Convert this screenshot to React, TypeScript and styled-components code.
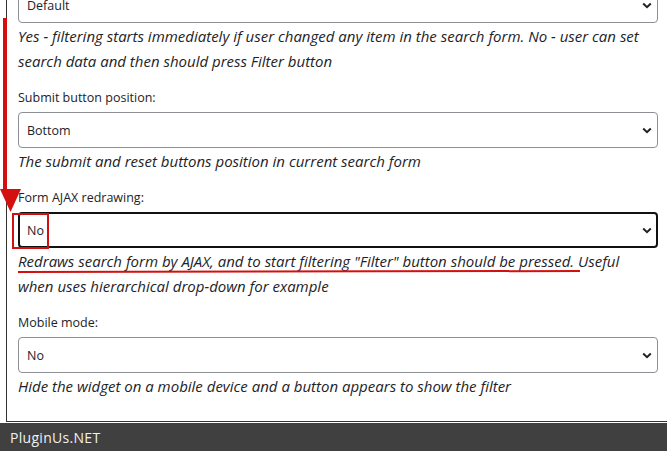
import React from 'react'
import styled, { createGlobalStyle, css } from 'styled-components'

const GlobalStyle = createGlobalStyle`
  html, body {
    margin: 0;
    padding: 0;
    background: #fff;
  }
  body {
    font-family: 'Open Sans', 'Noto Sans', sans-serif;
    color: #1d2327;
    overflow: hidden;
  }
`

const Page = styled.div`
  position: relative;
  width: 667px;
  height: 451px;
  display: flex;
  flex-direction: column;
  overflow: hidden;
`

const Panel = styled.div`
  flex: 1;
  margin-left: 6px;
  margin-bottom: 1px;
  border-left: 1px solid #333;
  border-bottom: 1px solid #333;
  padding: 0 9px 0 11px;
  overflow: hidden;
`

const FieldList = styled.div`
  margin-top: -13px;
  display: flex;
  flex-direction: column;
  gap: 14px;
`

const Field = styled.div`
  display: flex;
  flex-direction: column;
`

const Label = styled.div`
  font-size: 12.5px;
  line-height: 20px;
  margin-bottom: 4px;
`

const SelectWrap = styled.div`
  position: relative;
`

const Select = styled.select<{ $focused?: boolean }>`
  appearance: none;
  -webkit-appearance: none;
  display: block;
  width: 100%;
  height: 36px;
  box-sizing: border-box;
  border: 1px solid #8c8f94;
  border-radius: 4px;
  background: #fff;
  padding: 0 28px 0 8px;
  font-family: 'Open Sans', 'Noto Sans', sans-serif;
  font-size: 12.5px;
  color: #1d2327;
  outline: none;

  ${(p) =>
    p.$focused &&
    css`
      border: 2px solid #111;
      padding-left: 7px;
    `}
`

const Chevron = styled.svg`
  position: absolute;
  right: 6px;
  top: 50%;
  width: 10px;
  height: 7px;
  margin-top: -3px;
  pointer-events: none;
`

const Desc = styled.div`
  margin-top: 1px;
  font-size: 15px;
  font-style: italic;
  line-height: 25px;
  color: #1d2327;
`

const Footer = styled.div`
  height: 28px;
  flex: none;
  background: #404040;
  color: #f0f0f0;
  font-family: 'Open Sans', 'Noto Sans', sans-serif;
  font-size: 14px;
  letter-spacing: 0.3px;
  display: flex;
  align-items: center;
  padding-left: 10px;
`

const Annotations = styled.svg`
  position: absolute;
  left: 0;
  top: 0;
  width: 667px;
  height: 451px;
  pointer-events: none;
`

type FieldData = {
  label?: string
  value: string
  desc: string
  focused?: boolean
}

const fields: FieldData[] = [
  {
    value: 'Default',
    desc: 'Yes - filtering starts immediately if user changed any item in the search form. No - user can set search data and then should press Filter button',
  },
  {
    label: 'Submit button position:',
    value: 'Bottom',
    desc: 'The submit and reset buttons position in current search form',
  },
  {
    label: 'Form AJAX redrawing:',
    value: 'No',
    focused: true,
    desc: 'Redraws search form by AJAX, and to start filtering "Filter" button should be pressed. Useful when uses hierarchical drop-down for example',
  },
  {
    label: 'Mobile mode:',
    value: 'No',
    desc: 'Hide the widget on a mobile device and a button appears to show the filter',
  },
]

export default function App() {
  return (
    <Page>
      <GlobalStyle />
      <Panel>
        <FieldList>
          {fields.map((f, i) => (
            <Field key={i}>
              {f.label && <Label>{f.label}</Label>}
              <SelectWrap>
                <Select $focused={f.focused} defaultValue={f.value}>
                  <option>{f.value}</option>
                </Select>
                <Chevron viewBox="0 0 10 7">
                  <path d="M1.2 1.5 L5 5.2 L8.8 1.5" fill="none" stroke="#1d2327" strokeWidth="2" />
                </Chevron>
              </SelectWrap>
              <Desc>{f.desc}</Desc>
            </Field>
          ))}
        </FieldList>
      </Panel>
      <Footer>PluginUs.NET</Footer>
      <Annotations viewBox="0 0 667 451">
        <line x1="5" y1="18" x2="5" y2="192" stroke="#d40f0f" strokeWidth="4" />
        <polygon points="0,189 21,189 10.5,212" fill="#d40f0f" />
        <rect x="13" y="214" width="35" height="34" fill="none" stroke="#d40f0f" strokeWidth="2" />
        <line x1="18" y1="272" x2="580" y2="271" stroke="#d40f0f" strokeWidth="2" />
      </Annotations>
    </Page>
  )
}
